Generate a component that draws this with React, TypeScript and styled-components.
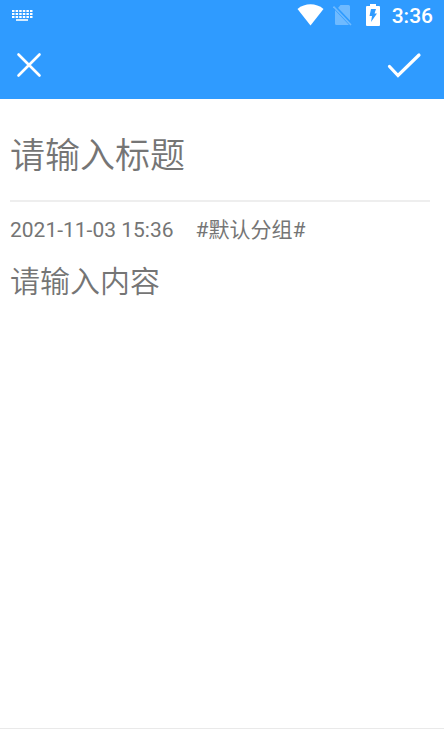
import React, { useState } from "react";
import styled, { createGlobalStyle } from "styled-components";

const GlobalStyle = createGlobalStyle`
  *, *::before, *::after { box-sizing: border-box; }
  body {
    margin: 0;
    background: #ffffff;
    color: #757575;
    font-family: Roboto, "Noto Sans CJK SC", sans-serif;
  }
`;

const Page = styled.div`
  display: flex;
  flex-direction: column;
  min-height: 100vh;
  border-bottom: 1px solid #e9e9e9;
`;

const Header = styled.header`
  background: #2f9bff;
  color: #ffffff;
`;

const StatusBar = styled.div`
  display: flex;
  align-items: center;
  justify-content: space-between;
  height: 32px;
  padding: 0 11px;
`;

const StatusIcons = styled.div`
  display: flex;
  align-items: center;
`;

const StatusIcon = styled.svg<{ $gap?: number }>`
  display: block;
  flex: none;
  margin-right: ${({ $gap = 0 }) => $gap}px;
  margin-bottom: 3px;
`;

const Clock = styled.time`
  font-size: 21px;
  font-weight: 500;
  line-height: 32px;
`;

const Toolbar = styled.div`
  display: flex;
  align-items: center;
  justify-content: space-between;
  height: 67px;
  padding: 0 16px 2px;
`;

const IconButton = styled.button`
  display: flex;
  padding: 0;
  border: 0;
  background: none;
  color: inherit;
  cursor: pointer;
`;

const Editor = styled.main`
  display: flex;
  flex: 1;
  flex-direction: column;
  padding: 0 14px 0 10px;
`;

const TitleInput = styled.input`
  width: 100%;
  height: 103px;
  padding: 14px 0 0;
  border: 0;
  border-bottom: 2px solid #eeeeee;
  outline: 0;
  background: none;
  color: #333333;
  font: inherit;
  font-size: 35px;
  font-weight: 350;
  &::placeholder { color: #757575; opacity: 1; }
`;

const Meta = styled.div`
  display: flex;
  gap: 22px;
  height: 58px;
  font-size: 21px;
  line-height: 56px;
  white-space: nowrap;
`;

const GroupButton = styled.button`
  display: block;
  height: 56px;
  padding: 0;
  border: 0;
  background: none;
  color: inherit;
  font: inherit;
  cursor: pointer;
`;

const ContentInput = styled.textarea`
  flex: 1;
  width: 100%;
  padding: 0;
  border: 0;
  outline: 0;
  resize: none;
  background: none;
  color: #333333;
  font: inherit;
  font-size: 30px;
  font-weight: 350;
  line-height: 44px;
  &::placeholder { color: #757575; opacity: 1; }
`;

const KeyboardIcon = () => (
  <StatusIcon width="22" height="12" viewBox="0 0 22 12" fill="none" stroke="currentColor" aria-hidden="true">
    <path d="M1 2h20.5M1 5h20.5M1 8h20.5" strokeWidth="1.8" strokeDasharray="2.5 1.1" />
    <path d="M5 11h12" strokeWidth="1.6" />
  </StatusIcon>
);

const WifiIcon = () => (
  <StatusIcon $gap={9} width="27" height="22" viewBox="0 0 27 22" fill="currentColor" aria-hidden="true">
    <path d="M0.5 5C8-1.2 19-1.2 26.5 5L13.5 21.5Z" />
  </StatusIcon>
);

const NoSimIcon = () => (
  <StatusIcon $gap={13} width="20" height="22" viewBox="0 0 20 22" aria-hidden="true">
    <path d="M7.5 1H15.5q1.5 0 1.5 1.5V16.5L5 4ZM2 5.5 16 20.5Q15.5 21 15 21H3.5Q2 21 2 19.5Z" fill="#6fbaff" />
    <path d="M0.5 2 18.5 21" fill="none" stroke="#2f9bff" strokeWidth="3.4" />
    <path d="M0.5 2.5 18 21" fill="none" stroke="#6fbaff" strokeWidth="1.6" />
  </StatusIcon>
);

const BatteryIcon = () => (
  <StatusIcon $gap={12} width="14" height="22" viewBox="0 0 14 22" aria-hidden="true">
    <path d="M4 0h6v2h3q1 0 1 1v18q0 1-1 1H1q-1 0-1-1V3q0-1 1-1h3Z" fill="currentColor" />
    <path d="M5 5h5L8.5 9.5H11L5 18l1-6H3.5Z" fill="#2f9bff" />
  </StatusIcon>
);

export default function App() {
  const [title, setTitle] = useState("");
  const [content, setContent] = useState("");

  return (
    <>
      <GlobalStyle />
      <Page>
        <Header>
          <StatusBar>
            <KeyboardIcon />
            <StatusIcons>
              <WifiIcon />
              <NoSimIcon />
              <BatteryIcon />
              <Clock>3:36</Clock>
            </StatusIcons>
          </StatusBar>
          <Toolbar>
            <IconButton type="button" aria-label="关闭">
              <svg width="26" height="26" viewBox="0 0 26 26" fill="none" stroke="currentColor" strokeWidth="2.6" strokeLinecap="round">
                <path d="m2.5 2.5 21 21m0-21-21 21" />
              </svg>
            </IconButton>
            <IconButton type="button" aria-label="保存">
              <svg width="42" height="26" viewBox="0 0 42 26" fill="none" stroke="currentColor" strokeWidth="3.2" strokeLinecap="round">
                <path d="m3.5 14.5 8.5 9L33 3" />
              </svg>
            </IconButton>
          </Toolbar>
        </Header>
        <Editor>
          <TitleInput
            aria-label="标题"
            placeholder="请输入标题"
            value={title}
            onChange={(e) => setTitle(e.target.value)}
          />
          <Meta>
            <time dateTime="2021-11-03T15:36">2021-11-03 15:36</time>
            <GroupButton type="button">#默认分组#</GroupButton>
          </Meta>
          <ContentInput
            aria-label="内容"
            placeholder="请输入内容"
            value={content}
            onChange={(e) => setContent(e.target.value)}
          />
        </Editor>
      </Page>
    </>
  );
}
